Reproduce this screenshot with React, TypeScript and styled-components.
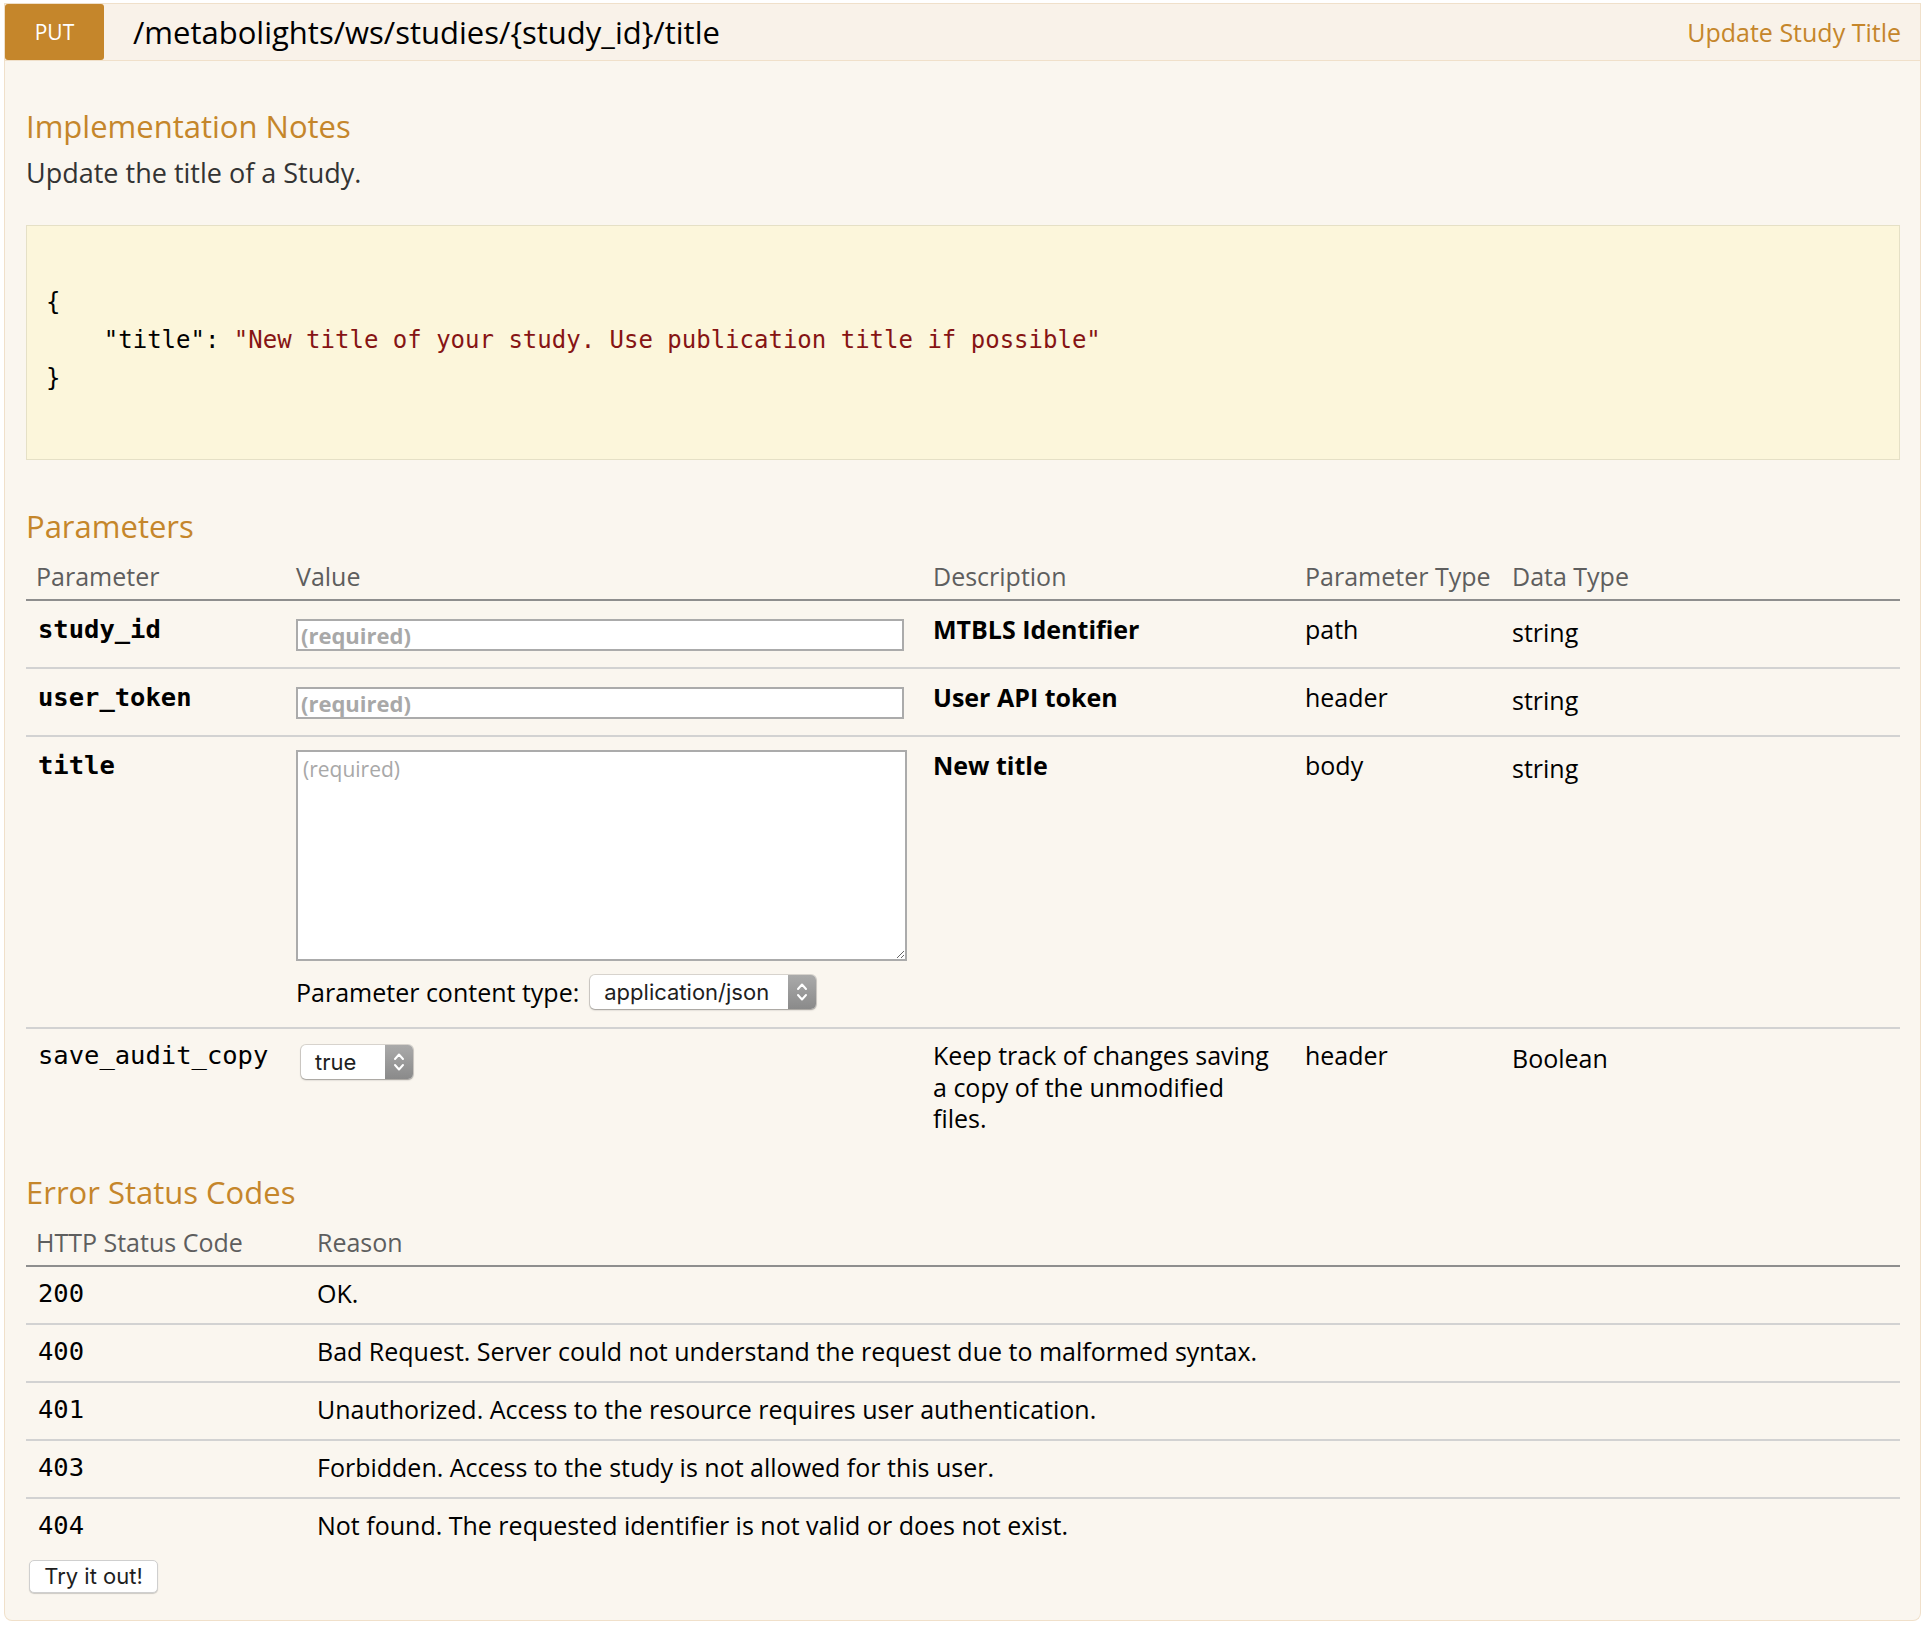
import React from "react";
import styled, { createGlobalStyle } from "styled-components";

const GlobalStyle = createGlobalStyle`
  html, body { margin: 0; padding: 0; background: #ffffff; }
  body { font-family: "Open Sans", "Noto Sans", sans-serif; color: #333; }
  * { box-sizing: border-box; }
`;

const ACCENT = "#c5862b";
const MONO = `"DejaVu Sans Mono", "Liberation Mono", monospace`;
const SYSTEM = `Inter, "Liberation Sans", Arial, sans-serif`;

const Operation = styled.section`
  margin: 3px 0 0 4px;
  width: 1917px;
`;

const Heading = styled.header`
  display: flex;
  align-items: center;
  height: 58px;
  background: #f9f2e9;
  border: 1px solid #f0e0ca;
  padding-right: 19px;
`;

const Method = styled.span`
  align-self: stretch;
  width: 99px;
  display: flex;
  align-items: center;
  justify-content: center;
  background: ${ACCENT};
  color: #fff;
  font-size: 21px;
  border-radius: 3px;
`;

const Path = styled.h3`
  margin: 0 0 0 29px;
  font-weight: 400;
  font-size: 31px;
  color: #000;
`;

const Summary = styled.span`
  margin-left: auto;
  color: ${ACCENT};
  font-size: 25px;
`;

const Content = styled.div`
  background: #faf6ef;
  border: 1px solid #f0e0ca;
  border-top: none;
  border-radius: 0 0 8px 8px;
  padding: 45px 20px 27px 21px;
`;

const SectionTitle = styled.h4<{ $top: number }>`
  margin: ${(p) => p.$top}px 0 0;
  color: ${ACCENT};
  font-size: 31px;
  font-weight: 400;
  line-height: 40px;
`;

const Note = styled.p`
  margin: 10px 0 0;
  font-size: 27px;
  line-height: 34px;
  color: #333;
`;

const CodeBlock = styled.pre`
  margin: 35px 0 0;
  background: #fcf6db;
  border: 1px solid #e5e0c6;
  padding: 57px 20px 62px 19px;
  font-family: ${MONO};
  font-size: 24px;
  line-height: 38px;
  color: #000;
`;

const Str = styled.span`
  color: #861414;
`;

const paramCols = "260px 637px 372px 207px 1fr";
const errorCols = "281px 1fr";

const Row = styled.div<{ $cols: string; $head?: boolean; $last?: boolean; $pt: number; $pb: number }>`
  display: grid;
  grid-template-columns: ${(p) => p.$cols};
  padding: ${(p) => p.$pt}px 0 ${(p) => p.$pb}px;
  border-bottom: ${(p) =>
    p.$last ? "none" : p.$head ? "2px solid #8e8e8e" : "2px solid #d2d2d2"};
`;

const HeadCell = styled.div`
  padding: 0 10px;
  font-size: 25px;
  line-height: 34px;
  color: #5e5e5e;
`;

const NameCell = styled.div<{ $required?: boolean }>`
  padding: 0 10px 0 12px;
  font-family: ${MONO};
  font-size: 25.5px;
  line-height: 30px;
  font-weight: ${(p) => (p.$required ? 700 : 400)};
  color: #000;
`;

const ValueCell = styled.div<{ $top?: number; $left?: number }>`
  padding: ${(p) => p.$top ?? 0}px 10px 0 ${(p) => 10 + (p.$left ?? 0)}px;
  display: flex;
  flex-direction: column;
  align-items: flex-start;
`;

const TextCell = styled.div<{ $bold?: boolean; $offset?: number }>`
  padding: ${(p) => p.$offset ?? 0}px 20px 0 10px;
  font-size: 25px;
  line-height: 31.5px;
  font-weight: ${(p) => (p.$bold ? 700 : 400)};
  color: #000;
`;

const Input = styled.input`
  width: 608px;
  height: 32px;
  border: 2px solid #ababab;
  background: #fff;
  padding: 0 3px;
  font-family: "Open Sans", sans-serif;
  font-size: 22px;
  &::placeholder {
    color: #a8a8a8;
    font-weight: 700;
  }
`;

const TextArea = styled.textarea`
  width: 611px;
  height: 211px;
  border: 2px solid #ababab;
  background: #fff;
  padding: 2px 5px;
  margin: 0;
  font-family: "Open Sans", sans-serif;
  font-size: 21px;
  line-height: 30px;
  resize: both;
  &::placeholder {
    color: #a8a8a8;
  }
`;

const ContentType = styled.label`
  margin-top: 14px;
  display: flex;
  align-items: center;
  gap: 11px;
  font-size: 25px;
  color: #000;
`;

const SelectBox = styled.div<{ $width: number }>`
  display: inline-flex;
  align-items: stretch;
  width: ${(p) => p.$width}px;
  height: 34px;
  border-radius: 5px;
  background: #fff;
  box-shadow: 0 0 0 1px rgba(0, 0, 0, 0.13), 0 1px 2px rgba(0, 0, 0, 0.28);
  overflow: hidden;
  font-family: ${SYSTEM};
  font-size: 22px;
  color: #1e1e1e;
`;

const SelectText = styled.span`
  flex: 1;
  display: flex;
  align-items: center;
  padding-left: 14px;
`;

const SelectArrows = styled.span`
  width: 28px;
  display: flex;
  align-items: center;
  justify-content: center;
  background: linear-gradient(#aaaaaa, #8a8a8a);
`;

const Select = ({ value, width }: { value: string; width: number }) => (
  <SelectBox $width={width}>
    <SelectText>{value}</SelectText>
    <SelectArrows>
      <svg width="14" height="24" viewBox="0 0 14 24" fill="none" stroke="#fff" strokeWidth="2" strokeLinecap="round" strokeLinejoin="round">
        <path d="M3 9 L7 4.5 L11 9" />
        <path d="M3 15 L7 19.5 L11 15" />
      </svg>
    </SelectArrows>
  </SelectBox>
);

const CodeCell = styled.div`
  padding: 0 10px 0 12px;
  font-family: ${MONO};
  font-size: 25.5px;
  line-height: 34px;
  color: #000;
`;

const ReasonCell = styled.div`
  padding: 0 10px;
  font-size: 25px;
  line-height: 34px;
  color: #000;
`;

const TryButton = styled.button`
  margin: 5px 0 0 3px;
  align-self: flex-start;
  width: 129px;
  height: 33px;
  background: #fff;
  border: 1px solid #cfcfcf;
  border-radius: 5px;
  box-shadow: 0 1px 1px rgba(0, 0, 0, 0.18);
  font-family: ${SYSTEM};
  font-size: 22px;
  color: #1e1e1e;
  padding: 0;
`;

const Block = styled.div`
  display: flex;
  flex-direction: column;
`;

const errors: [string, string][] = [
  ["200", "OK."],
  ["400", "Bad Request. Server could not understand the request due to malformed syntax."],
  ["401", "Unauthorized. Access to the resource requires user authentication."],
  ["403", "Forbidden. Access to the study is not allowed for this user."],
  ["404", "Not found. The requested identifier is not valid or does not exist."],
];

export default function App() {
  return (
    <>
      <GlobalStyle />
      <Operation>
        <Heading>
          <Method>PUT</Method>
          <Path>/metabolights/ws/studies/{"{study_id}"}/title</Path>
          <Summary>Update Study Title</Summary>
        </Heading>
        <Content>
          <SectionTitle $top={0}>Implementation Notes</SectionTitle>
          <Note>Update the title of a Study.</Note>
          <CodeBlock>
            {"{\n    "}
            {'"title": '}
            <Str>"New title of your study. Use publication title if possible"</Str>
            {"\n}"}
          </CodeBlock>

          <SectionTitle $top={46}>Parameters</SectionTitle>
          <Block>
            <Row $cols={paramCols} $head $pt={13} $pb={6}>
              <HeadCell>Parameter</HeadCell>
              <HeadCell>Value</HeadCell>
              <HeadCell>Description</HeadCell>
              <HeadCell>Parameter Type</HeadCell>
              <HeadCell>Data Type</HeadCell>
            </Row>
            <Row $cols={paramCols} $pt={13} $pb={16}>
              <NameCell $required>study_id</NameCell>
              <ValueCell $top={5}>
                <Input placeholder="(required)" />
              </ValueCell>
              <TextCell $bold>MTBLS Identifier</TextCell>
              <TextCell>path</TextCell>
              <TextCell $offset={3}>string</TextCell>
            </Row>
            <Row $cols={paramCols} $pt={13} $pb={16}>
              <NameCell $required>user_token</NameCell>
              <ValueCell $top={5}>
                <Input placeholder="(required)" />
              </ValueCell>
              <TextCell $bold>User API token</TextCell>
              <TextCell>header</TextCell>
              <TextCell $offset={3}>string</TextCell>
            </Row>
            <Row $cols={paramCols} $pt={13} $pb={18}>
              <NameCell $required>title</NameCell>
              <ValueCell>
                <TextArea placeholder="(required)" />
                <ContentType>
                  Parameter content type:
                  <Select value="application/json" width={226} />
                </ContentType>
              </ValueCell>
              <TextCell $bold>New title</TextCell>
              <TextCell>body</TextCell>
              <TextCell $offset={3}>string</TextCell>
            </Row>
            <Row $cols={paramCols} $last $pt={11} $pb={16}>
              <NameCell>save_audit_copy</NameCell>
              <ValueCell $top={5} $left={5}>
                <Select value="true" width={112} />
              </ValueCell>
              <TextCell>Keep track of changes saving a copy of the unmodified files.</TextCell>
              <TextCell>header</TextCell>
              <TextCell $offset={3}>Boolean</TextCell>
            </Row>
          </Block>

          <SectionTitle $top={21}>Error Status Codes</SectionTitle>
          <Block>
            <Row $cols={errorCols} $head $pt={13} $pb={6}>
              <HeadCell>HTTP Status Code</HeadCell>
              <HeadCell>Reason</HeadCell>
            </Row>
            {errors.map(([code, reason], i) => (
              <Row key={code} $cols={errorCols} $last={i === errors.length - 1} $pt={9} $pb={13}>
                <CodeCell>{code}</CodeCell>
                <ReasonCell>{reason}</ReasonCell>
              </Row>
            ))}
            <TryButton type="button">Try it out!</TryButton>
          </Block>
        </Content>
      </Operation>
    </>
  );
}
